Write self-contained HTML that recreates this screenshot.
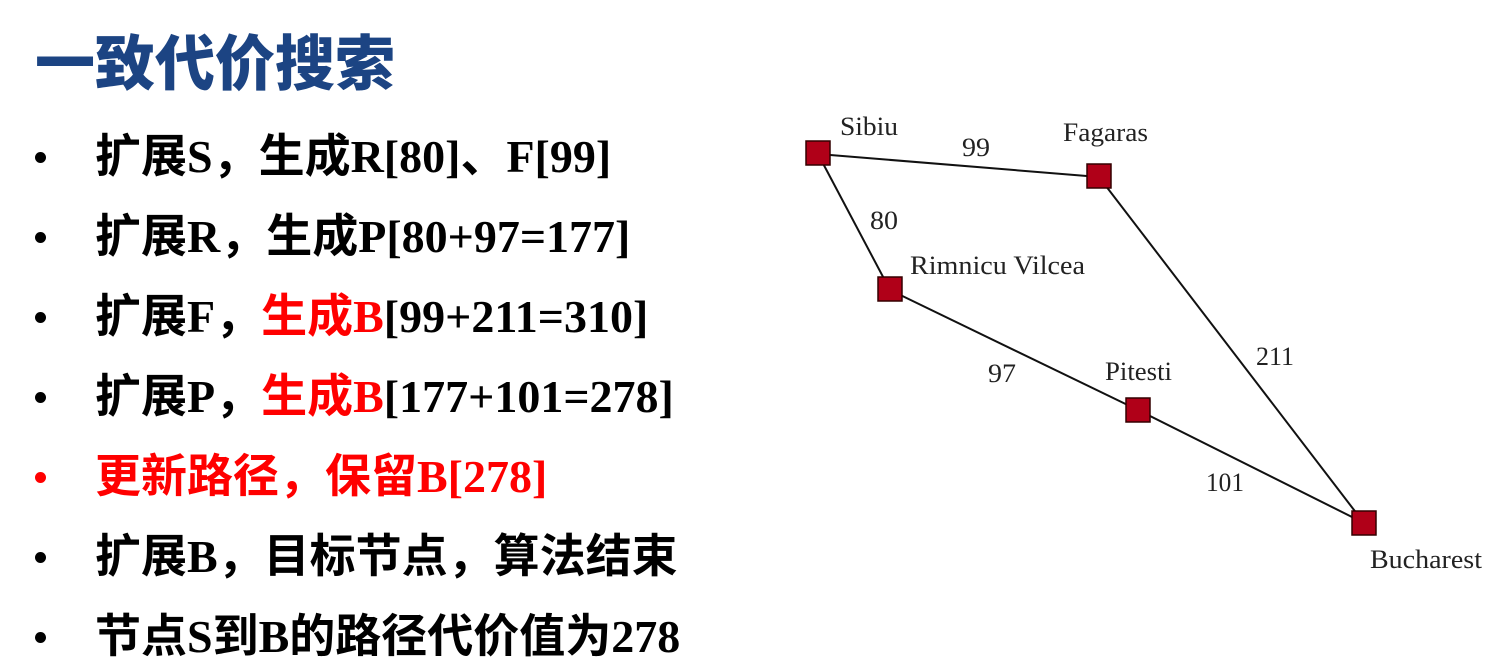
<!DOCTYPE html>
<html><head><meta charset="utf-8"><style>
body{margin:0;width:1504px;height:667px;background:#fff;overflow:hidden;position:relative}
.t{position:absolute;left:35px;top:16px;font:900 60px "Liberation Sans","Noto Sans CJK SC",sans-serif;color:#1c4483;white-space:nowrap}
.l{position:absolute;left:95px;font:bold 46px "Liberation Serif","Noto Sans CJK SC",sans-serif;color:#000;white-space:nowrap;line-height:52px}
.d{position:absolute;left:35px;width:11px;height:11px;border-radius:50%;background:#000}
.r{color:#f00}
svg text{font-family:"Liberation Serif",serif;font-size:26px;fill:#222}
</style></head><body>
<div class="t">一致代价搜索</div>
<div class="d" style="top:152px"></div><div class="l" style="top:131px">扩展S，生成R[80]、F[99]</div>
<div class="d" style="top:232px"></div><div class="l" style="top:211px">扩展R，生成P[80+97=177]</div>
<div class="d" style="top:312px"></div><div class="l" style="top:291px">扩展F，<span class="r">生成B</span>[99+211=310]</div>
<div class="d" style="top:392px"></div><div class="l" style="top:371px">扩展P，<span class="r">生成B</span>[177+101=278]</div>
<div class="d" style="top:472px;background:#f00"></div><div class="l r" style="top:451px">更新路径，保留B[278]</div>
<div class="d" style="top:552px"></div><div class="l" style="top:531px">扩展B，目标节点，算法结束</div>
<div class="d" style="top:632px"></div><div class="l" style="top:611px">节点S到B的路径代价值为278</div>
<svg width="1504" height="667" style="position:absolute;left:0;top:0">
<g stroke="#111" stroke-width="2">
<line x1="818" y1="154" x2="1099" y2="177"/>
<line x1="818" y1="154" x2="890" y2="290"/>
<line x1="1099" y1="177" x2="1364" y2="523"/>
<line x1="890" y1="290" x2="1138" y2="410"/>
<line x1="1138" y1="410" x2="1364" y2="523"/>
</g>
<g fill="#b00018" stroke="#300" stroke-width="1.5">
<rect x="806" y="141" width="24" height="24"/>
<rect x="1087" y="164" width="24" height="24"/>
<rect x="878" y="277" width="24" height="24"/>
<rect x="1126" y="398" width="24" height="24"/>
<rect x="1352" y="511" width="24" height="24"/>
</g>
<text x="840" y="135" textLength="58" lengthAdjust="spacingAndGlyphs">Sibiu</text>
<text x="1063" y="141" textLength="85" lengthAdjust="spacingAndGlyphs">Fagaras</text>
<text x="962" y="156" textLength="28" lengthAdjust="spacingAndGlyphs">99</text>
<text x="870" y="229" textLength="28" lengthAdjust="spacingAndGlyphs">80</text>
<text x="910" y="274" textLength="175" lengthAdjust="spacingAndGlyphs">Rimnicu Vilcea</text>
<text x="988" y="382" textLength="28" lengthAdjust="spacingAndGlyphs">97</text>
<text x="1105" y="380" textLength="67" lengthAdjust="spacingAndGlyphs">Pitesti</text>
<text x="1256" y="365" textLength="38" lengthAdjust="spacingAndGlyphs">211</text>
<text x="1206" y="491" textLength="38" lengthAdjust="spacingAndGlyphs">101</text>
<text x="1370" y="568" textLength="112" lengthAdjust="spacingAndGlyphs">Bucharest</text>
</svg>
</body></html>
